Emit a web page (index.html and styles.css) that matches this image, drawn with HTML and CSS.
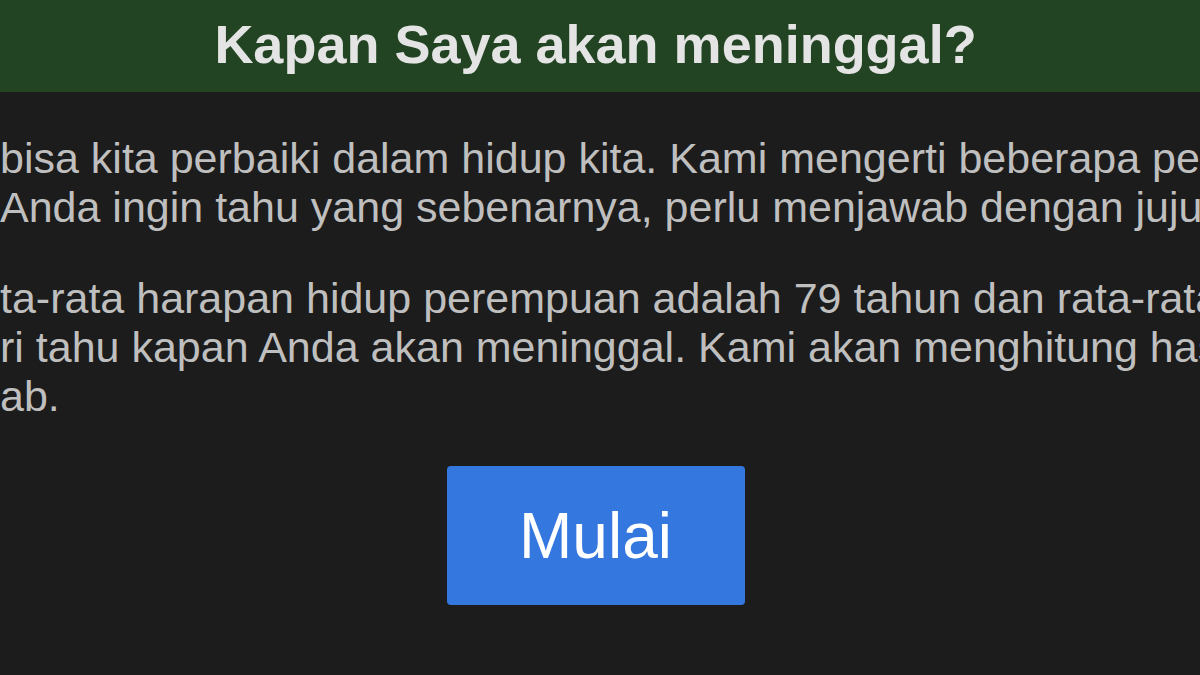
FILE: index.html
```html
<!DOCTYPE html>
<html lang="id">
<head>
<meta charset="utf-8">
<title>Kapan Saya akan meninggal?</title>
<link rel="stylesheet" href="styles.css">
</head>
<body>
<header class="topbar">
  <h1 class="title">Kapan Saya akan meninggal?</h1>
</header>
<main class="content">
  <p class="para">
    <span class="line">bisa kita perbaiki dalam hidup kita. Kami mengerti beberapa pertanyaan</span>
    <span class="line">Anda ingin tahu yang sebenarnya, perlu menjawab dengan jujur.</span>
  </p>
  <p class="para">
    <span class="line">ta-rata harapan hidup perempuan adalah 79 tahun dan rata-rata</span>
    <span class="line">ri tahu kapan Anda akan meninggal. Kami akan menghitung hasilnya</span>
    <span class="line">ab.</span>
  </p>
  <div class="actions">
    <button class="start" type="button">Mulai</button>
  </div>
</main>
</body>
</html>
```

FILE: styles.css
```css
html, body {
  margin: 0;
  padding: 0;
}

body {
  width: 1200px;
  height: 675px;
  overflow: hidden;
  background: #1c1c1c;
  font-family: "Liberation Sans", Arial, sans-serif;
}

.topbar {
  background: #224423;
  height: 92px;
  box-sizing: border-box;
  padding: 14px 9px 0 0;
}

.title {
  margin: 0;
  text-align: center;
  font-size: 54px;
  font-weight: bold;
  line-height: 60px;
  color: #e4e4e4;
}

.content {
  padding-right: 9px;
}

.para {
  margin: 42px 0;
  font-size: 43px;
  line-height: 49px;
  color: #bfbfbf;
  white-space: nowrap;
}

.line {
  display: block;
}

.actions {
  display: flex;
  justify-content: center;
  padding-top: 3px;
}

.start {
  width: 298px;
  height: 139px;
  border: none;
  border-radius: 4px;
  background: #3477df;
  color: #ffffff;
  font-family: "Liberation Sans", Arial, sans-serif;
  font-size: 64px;
  padding: 0;
  cursor: pointer;
}
```
